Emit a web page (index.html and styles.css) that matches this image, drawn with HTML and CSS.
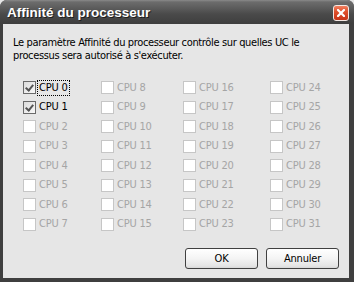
FILE: index.html
```html
<!DOCTYPE html>
<html lang="fr">
<head>
<meta charset="utf-8">
<title>Affinité du processeur</title>
<link rel="stylesheet" href="styles.css">
</head>
<body>
<div class="window">
  <div class="titlebar">
    <span class="title">Affinité du processeur</span>
    <span class="close" aria-label="Fermer">
      <svg width="8" height="8" viewBox="0 0 8 8"><path d="M1 1 L7 7 M7 1 L1 7" stroke="#fff" stroke-width="2.2" stroke-linecap="square"/></svg>
    </span>
  </div>
  <div class="client">
    <p class="desc">Le paramètre Affinité du processeur contrôle sur quelles UC le<br>processus sera autorisé à s'exécuter.</p>
    <div class="cpu-grid">
      <div class="cpu on"><span class="box checked"></span><span class="lbl focus">CPU 0</span></div>
      <div class="cpu on"><span class="box checked"></span><span class="lbl">CPU 1</span></div>
      <div class="cpu"><span class="box"></span><span class="lbl">CPU 2</span></div>
      <div class="cpu"><span class="box"></span><span class="lbl">CPU 3</span></div>
      <div class="cpu"><span class="box"></span><span class="lbl">CPU 4</span></div>
      <div class="cpu"><span class="box"></span><span class="lbl">CPU 5</span></div>
      <div class="cpu"><span class="box"></span><span class="lbl">CPU 6</span></div>
      <div class="cpu"><span class="box"></span><span class="lbl">CPU 7</span></div>
      <div class="cpu"><span class="box"></span><span class="lbl">CPU 8</span></div>
      <div class="cpu"><span class="box"></span><span class="lbl">CPU 9</span></div>
      <div class="cpu"><span class="box"></span><span class="lbl">CPU 10</span></div>
      <div class="cpu"><span class="box"></span><span class="lbl">CPU 11</span></div>
      <div class="cpu"><span class="box"></span><span class="lbl">CPU 12</span></div>
      <div class="cpu"><span class="box"></span><span class="lbl">CPU 13</span></div>
      <div class="cpu"><span class="box"></span><span class="lbl">CPU 14</span></div>
      <div class="cpu"><span class="box"></span><span class="lbl">CPU 15</span></div>
      <div class="cpu"><span class="box"></span><span class="lbl">CPU 16</span></div>
      <div class="cpu"><span class="box"></span><span class="lbl">CPU 17</span></div>
      <div class="cpu"><span class="box"></span><span class="lbl">CPU 18</span></div>
      <div class="cpu"><span class="box"></span><span class="lbl">CPU 19</span></div>
      <div class="cpu"><span class="box"></span><span class="lbl">CPU 20</span></div>
      <div class="cpu"><span class="box"></span><span class="lbl">CPU 21</span></div>
      <div class="cpu"><span class="box"></span><span class="lbl">CPU 22</span></div>
      <div class="cpu"><span class="box"></span><span class="lbl">CPU 23</span></div>
      <div class="cpu"><span class="box"></span><span class="lbl">CPU 24</span></div>
      <div class="cpu"><span class="box"></span><span class="lbl">CPU 25</span></div>
      <div class="cpu"><span class="box"></span><span class="lbl">CPU 26</span></div>
      <div class="cpu"><span class="box"></span><span class="lbl">CPU 27</span></div>
      <div class="cpu"><span class="box"></span><span class="lbl">CPU 28</span></div>
      <div class="cpu"><span class="box"></span><span class="lbl">CPU 29</span></div>
      <div class="cpu"><span class="box"></span><span class="lbl">CPU 30</span></div>
      <div class="cpu"><span class="box"></span><span class="lbl">CPU 31</span></div>
    </div>
    <div class="buttons">
      <button class="btn">OK</button>
      <button class="btn">Annuler</button>
    </div>
  </div>
</div>
</body>
</html>
```
FILE: styles.css
```css
html, body {
  margin: 0;
  padding: 0;
  background: #e6e6e6;
}
.window {
  width: 354px;
  height: 282px;
  box-sizing: border-box;
  display: flex;
  flex-direction: column;
  background: #3f3f3f;
  border-radius: 7px 7px 0 0;
  padding: 0 5px 4px 3px;
  font-family: "DejaVu Sans Condensed", "DejaVu Sans", sans-serif;
  font-size: 11px;
  letter-spacing: -0.2px;
}
.titlebar {
  height: 24px;
  margin: 0 -5px 0 -3px;
  padding: 0 5px 0 7px;
  display: flex;
  align-items: center;
  justify-content: space-between;
  border-radius: 7px 7px 0 0;
  background: linear-gradient(#8a8a8a 0, #6c6c6c 2px, #5c5c5c 8px, #4a4a4a 14px, #3e3e3e 24px);
}
.title {
  font-family: "Liberation Sans", Arial, sans-serif;
  font-weight: bold;
  font-size: 13.5px;
  letter-spacing: 0;
  color: #fff;
  text-shadow: 1px 1px 0 #1e1e1e;
  padding-top: 1px;
}
.close {
  width: 14px;
  height: 14px;
  border: 1px solid #f4e8e4;
  border-radius: 3px;
  background: linear-gradient(#f08060 0, #e0502c 40%, #c83418 100%);
  display: flex;
  align-items: center;
  justify-content: center;
  margin-top: 1px;
}
.client {
  flex: 1;
  background: #e6e6e6;
  padding: 12px 10px 0 10px;
  display: flex;
  flex-direction: column;
}
.desc {
  margin: 0;
  line-height: 13px;
  color: #000;
  white-space: nowrap;
  letter-spacing: -0.35px;
}
.cpu-grid {
  margin: 19px 0 0 10px;
  display: grid;
  grid-auto-flow: column;
  grid-template-rows: repeat(8, 19.5px);
  grid-template-columns: 78px 82px 87px auto;
}
.cpu {
  display: flex;
  align-items: center;
  height: 13px;
  color: #a5a5a5;
}
.cpu.on {
  color: #000;
}
.box {
  width: 11px;
  height: 11px;
  border: 1px solid #c6c6c6;
  background: #fff;
  margin-right: 1px;
  position: relative;
  flex: none;
}
.box.checked {
  border-color: #6a6a6a;
  background: linear-gradient(135deg, #dcdcdc, #f8f8f8);
}
.box.checked::after {
  content: "";
  position: absolute;
  left: 3px;
  top: 1px;
  width: 3px;
  height: 6px;
  border: solid #555;
  border-width: 0 2px 2px 0;
  transform: rotate(40deg);
}
.lbl {
  padding: 1px 1px;
  line-height: 12px;
  border: 1px solid transparent;
}
.lbl.focus {
  border: 1px dotted #000;
}
.buttons {
  margin-top: auto;
  margin-bottom: 9px;
  display: flex;
  justify-content: flex-end;
  gap: 8px;
}
.btn {
  width: 73px;
  height: 21px;
  border: 1px solid #404040;
  border-radius: 3px;
  background: linear-gradient(#ffffff 0, #f4f4f4 50%, #e4e4e4 90%, #d6d6d6 100%);
  font-family: "DejaVu Sans Condensed", "DejaVu Sans", sans-serif;
  font-size: 11px;
  letter-spacing: -0.2px;
  color: #000;
  padding: 0;
}
```
